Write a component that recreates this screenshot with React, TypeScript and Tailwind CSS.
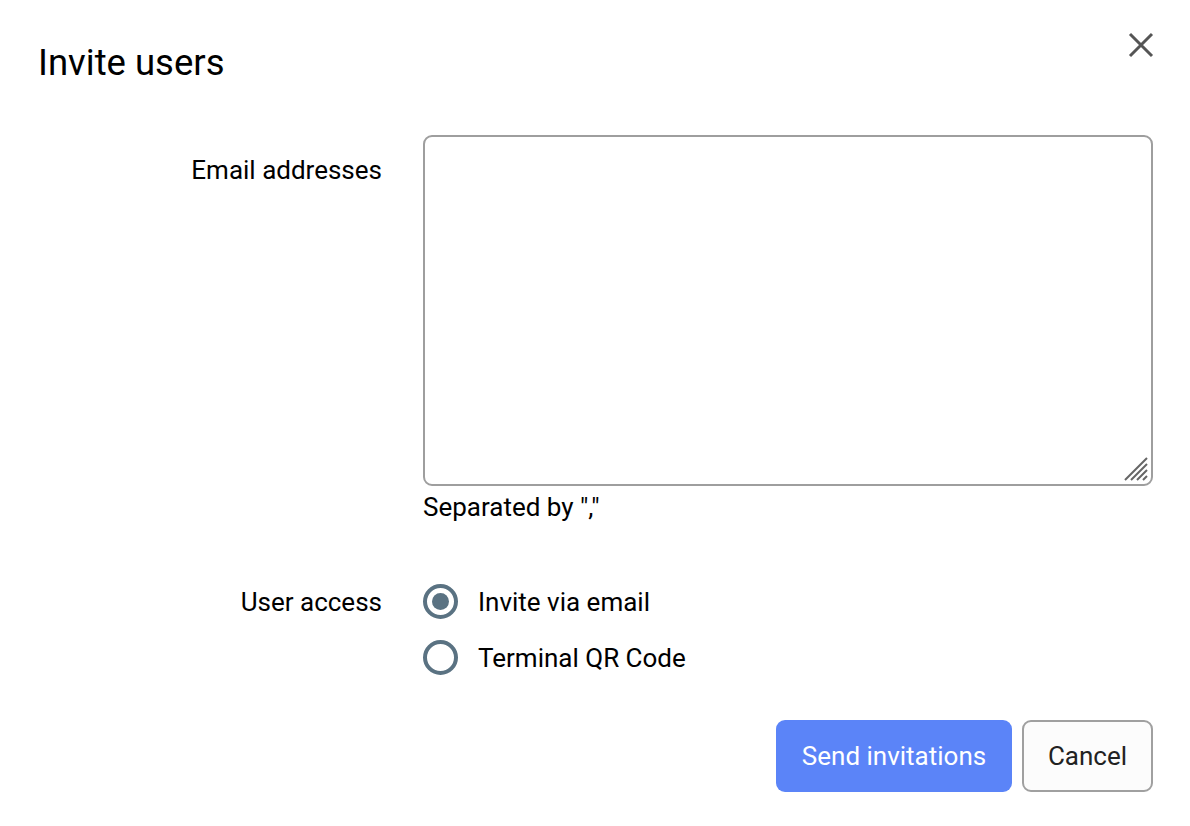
import { useState } from "react";

export default function App() {
  const [access, setAccess] = useState("email");

  return (
    <div className="relative h-[826px] w-[1190px] bg-white font-['Roboto',sans-serif] text-black">
      <button className="absolute right-[36px] top-[32px] text-[#555]">
        <svg width="26" height="26" viewBox="0 0 26 26" fill="none" stroke="currentColor" strokeWidth="3">
          <path d="M2 2L24 24M24 2L2 24" />
        </svg>
      </button>

      <div className="pl-[38px] pr-[37px] pt-[40px]">
        <h1 className="text-[36.5px] leading-[46px]">Invite users</h1>

        <div className="mt-[49px] grid grid-cols-[344px_1fr] gap-x-[41px] text-[26px]">
          <label className="pt-[18px] text-right leading-[34px]">Email addresses</label>
          <div>
            <div className="relative">
              <textarea className="block h-[351px] w-full resize-none rounded-[9px] border-2 border-[#9e9e9e] p-3 outline-none" />
              <svg
                className="pointer-events-none absolute bottom-[4px] right-[4px]"
                width="26"
                height="26"
                viewBox="0 0 26 26"
                stroke="#666"
                strokeWidth="2"
              >
                <path d="M2 24L24 2M8 24L24 8M14 24L24 14M20 24L24 20" />
              </svg>
            </div>
            <p className="mt-[4px] leading-[34px]">Separated by ","</p>
          </div>

          <div className="mt-[60px] text-right leading-[34px] pt-[1px]">User access</div>
          <div className="mt-[60px] flex flex-col gap-[21px]">
            {[
              { id: "email", label: "Invite via email" },
              { id: "qr", label: "Terminal QR Code" },
            ].map((o) => (
              <label key={o.id} className="flex cursor-pointer items-center gap-[20px] leading-[34px]">
                <span className="flex h-[35px] w-[35px] items-center justify-center rounded-full border-[4px] border-[#5a7282]">
                  {access === o.id && <span className="h-[17px] w-[17px] rounded-full bg-[#5a7282]" />}
                </span>
                <input
                  type="radio"
                  className="hidden"
                  checked={access === o.id}
                  onChange={() => setAccess(o.id)}
                />
                {o.label}
              </label>
            ))}
          </div>
        </div>

        <div className="mt-[45px] flex justify-end gap-[10px] text-[26px]">
          <button className="h-[72px] w-[236px] rounded-[9px] bg-[#5b84f8] text-white">Send invitations</button>
          <button className="h-[72px] w-[131px] rounded-[9px] border-2 border-[#a0a0a0] bg-[#fcfcfc] text-[#222]">
            Cancel
          </button>
        </div>
      </div>
    </div>
  );
}
